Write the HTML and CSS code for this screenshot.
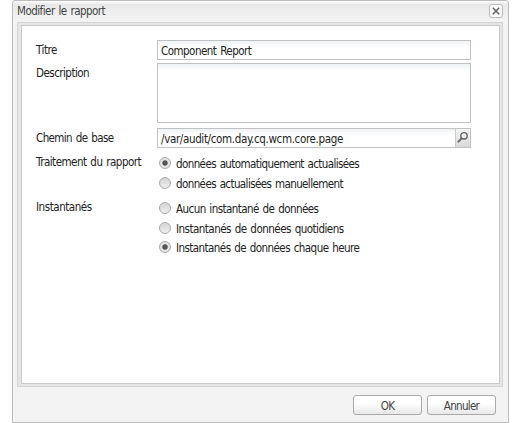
FILE: index.html
```html
<!DOCTYPE html>
<html lang="fr">
<head>
<meta charset="utf-8">
<title>Modifier le rapport</title>
<link rel="stylesheet" href="styles.css">
</head>
<body>
<div class="dialog">
  <div class="header">
    <span class="title">Modifier le rapport</span>
    <span class="close"><svg width="8" height="8" viewBox="0 0 8 8"><path d="M0.8 0.8 7.2 7.2M7.2 0.8 0.8 7.2" stroke="#666" stroke-width="1.6"/></svg></span>
  </div>
  <div class="frame">
    <div class="panel">
      <div class="row row-title"><span class="label">Titre</span><div class="field"><span class="value-title">Component Report</span></div></div>
      <div class="row row-desc"><span class="label description">Description</span><div class="field area"></div></div>
      <div class="row row-path"><span class="label base">Chemin de base</span>
        <div class="field"><span class="path">/var/audit/com.day.cq.wcm.core.page</span>
          <span class="trigger"><svg width="13" height="14" viewBox="0 0 13 14"><circle cx="7" cy="4.8" r="3.2" fill="#eee" stroke="#666" stroke-width="1.4"/><path d="M4.6 7.4 1.4 10.6" stroke="#666" stroke-width="2" stroke-linecap="round"/></svg></span>
        </div>
      </div>
      <div class="row row-process"><span class="label process">Traitement du rapport</span>
        <div class="options">
          <div class="option"><i class="radio on"></i><span class="o1">données automatiquement actualisées</span></div>
          <div class="option"><i class="radio"></i><span class="o2">données actualisées manuellement</span></div>
        </div>
      </div>
      <div class="row row-snap"><span class="label snap">Instantanés</span>
        <div class="options">
          <div class="option"><i class="radio"></i><span class="o3">Aucun instantané de données</span></div>
          <div class="option"><i class="radio"></i><span class="o4">Instantanés de données quotidiens</span></div>
          <div class="option"><i class="radio on"></i><span class="o5">Instantanés de données chaque heure</span></div>
        </div>
      </div>
    </div>
  </div>
  <div class="footer"><span class="button">OK</span><span class="button">Annuler</span></div>
</div>
</body>
</html>
```
FILE: styles.css
```css
* { box-sizing: border-box; }
body {
  margin: 0;
  background: #fff;
  font: 11.5px/14px "DejaVu Sans Condensed", "DejaVu Sans", sans-serif;
  font-stretch: condensed;
  letter-spacing: -0.52px;
  word-spacing: 1px;
  color: #222;
  white-space: nowrap;
  overflow: hidden;
}
.dialog {
  width: 497px;
  height: 423px;
  margin-left: 12px;
  border: 1px solid #bcbcbc;
  border-radius: 3px 3px 0 0;
  background: linear-gradient(#fff 0, #e9e9e9 3px, #f3f3f3 20px);
  padding: 0 5px 0 4px;
}
.header {
  height: 21px;
  display: flex;
  justify-content: space-between;
  padding-top: 3px;
}
.title { color: #444; }
.label { letter-spacing: -0.45px; }
.label.description { letter-spacing: -0.53px; }
.label.base { letter-spacing: -0.6px; }
.label.process { letter-spacing: -0.5px; }
.path { letter-spacing: -0.35px; }
.o1, .o2 { letter-spacing: -0.6px; }
.o3, .o5 { letter-spacing: -0.56px; }
.close {
  width: 14px;
  height: 14px;
  border: 1px solid #bbb;
  border-radius: 3px;
  background: #fafafa;
  display: flex;
  align-items: center;
  justify-content: center;
}
.frame {
  height: 365px;
  border: 1px solid #d3d3d3;
  background: #e6e6e6;
  padding: 2px 2px 2px 3px;
}
.panel {
  height: 359px;
  border: 1px solid #c9c9c9;
  background: #fff;
  padding: 14px 0 0 14px;
}
.row { display: flex; }
.label { width: 121px; padding-top: 3px; flex: none; }
.row-title { height: 23px; }
.row-desc { height: 65px; }
.row-path { height: 24px; }
.row-process { height: 45px; }
.field {
  width: 314px;
  height: 20px;
  border: 1px solid #bfc1c3;
  background: linear-gradient(#eff3f4, #fff 7px);
  padding: 3px 0 0 3px;
  display: flex;
  justify-content: space-between;
}
.area { height: 60px; }
.trigger {
  width: 15px;
  height: 18px;
  margin-top: -3px;
  padding: 2px 0 0 1px;
  border-left: 1px solid #ccc;
  background: linear-gradient(#f6f6f6, #d8d8d8);
}
.options { padding: 5px 0 0 2px; }
.option { height: 19.7px; display: flex; align-items: flex-start; }
.radio {
  width: 12px;
  height: 12px;
  margin-right: 5px;
  border: 1px solid #aaa;
  border-radius: 50%;
  background: linear-gradient(#d4d4d4, #eee);
}
.on { background: radial-gradient(circle, #555 2.2px, #e4e4e4 3.2px); }
.footer {
  display: flex;
  justify-content: flex-end;
  gap: 5px;
  padding: 8px 8px 0 0;
  margin-right: -1px;
}
.button {
  width: 69px;
  height: 20px;
  border: 1px solid #aaa;
  border-radius: 3px;
  background: linear-gradient(#fff 40%, #e8e8e8);
  color: #444;
  text-align: center;
  letter-spacing: -0.7px;
  line-height: 20px;
}
```
